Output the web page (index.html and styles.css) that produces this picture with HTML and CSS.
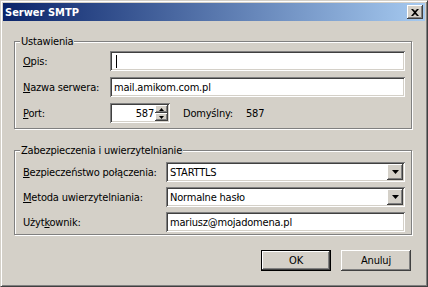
FILE: index.html
```html
<!DOCTYPE html>
<html lang="pl">
<head>
    <meta charset="UTF-8">
    <meta name="viewport" content="width=device-width, initial-scale=1.0">
    <title>Serwer SMTP</title>

    <link rel="stylesheet" href="styles.css">
</head>
<body>
  <div class="window">
    <div class="titlebar">
      <span class="title">Serwer SMTP</span>
      <span class="close">
        <svg width="8" height="7" viewBox="0 0 8 7"><path d="M0 0h2l2 2 2-2h2L5 3.5 8 7H6L4 5 2 7H0l3-3.5z" fill="#000"/></svg>
      </span>
    </div>

    <div class="content">
      <div class="group settings">
        <span class="legend">Ustawienia</span>

        <div class="row">
          <span class="label"><u>O</u>pis:</span>
          <div class="edit"><span class="caret"></span></div>
        </div>
        <div class="row">
          <span class="label"><u>N</u>azwa serwera:</span>
          <div class="edit">mail.amikom.com.pl</div>
        </div>
        <div class="row">
          <span class="label"><u>P</u>ort:</span>
          <div class="edit spin">
            <span class="spin-value">587</span>
            <span class="spin-btns">
              <span class="bevel"><svg width="5" height="3" viewBox="0 0 5 3"><path d="M2.5 0L5 3H0z" fill="#000"/></svg></span>
              <span class="bevel"><svg width="5" height="3" viewBox="0 0 5 3"><path d="M0 0h5L2.5 3z" fill="#000"/></svg></span>
            </span>
          </div>
          <span class="default-label">Domyślny:</span>
          <span>587</span>
        </div>
      </div>

      <div class="group security">
        <span class="legend">Zabezpieczenia i uwierzytelnianie</span>

        <div class="row">
          <span class="label"><u>B</u>ezpieczeństwo połączenia:</span>
          <div class="edit combo">
            <span class="combo-text">STARTTLS</span>
            <span class="bevel drop"><svg width="7" height="4" viewBox="0 0 7 4"><path d="M0 0h7L3.5 4z" fill="#000"/></svg></span>
          </div>
        </div>
        <div class="row">
          <span class="label"><u>M</u>etoda uwierzytelniania:</span>
          <div class="edit combo">
            <span class="combo-text">Normalne hasło</span>
            <span class="bevel drop"><svg width="7" height="4" viewBox="0 0 7 4"><path d="M0 0h7L3.5 4z" fill="#000"/></svg></span>
          </div>
        </div>
        <div class="row">
          <span class="label">Użyt<u>k</u>ownik:</span>
          <div class="edit">mariusz@mojadomena.pl</div>
        </div>
      </div>

      <div class="buttons">
        <button class="btn default">OK</button>
        <button class="btn">Anuluj</button>
      </div>
    </div>
  </div>
</body>
</html>
```

FILE: styles.css
```css
*{
  margin: 0;
  padding: 0;
  box-sizing: border-box;
}

body{
  background-color: #d4d0c8;
  font-family: "DejaVu Sans", "Liberation Sans", sans-serif;
  font-stretch: condensed;
  font-size: 11px;
  letter-spacing: -0.2px;
  color: #000;
}

.window{
  width: 428px;
  height: 287px;
  padding: 2px;
  display: flex;
  flex-direction: column;
  background-color: #d4d0c8;
  border: 1px solid;
  border-color: #d4d0c8 #404040 #404040 #d4d0c8;
  box-shadow: inset 1px 1px #fff, inset -1px -1px #808080;
}

.titlebar{
  height: 18px;
  display: flex;
  align-items: center;
  justify-content: space-between;
  padding-left: 2px;
  background: linear-gradient(to right, #0a246a, #a6caf0);
}

.title{
  color: #fff;
  font-weight: bold;
  letter-spacing: 0;
}

.close{
  width: 16px;
  height: 14px;
  margin-right: 2px;
  display: flex;
  align-items: center;
  justify-content: center;
  background-color: #d4d0c8;
  box-shadow: inset -1px -1px #404040, inset 1px 1px #fff, inset -2px -2px #808080;
}

.content{
  padding: 0 13px 0 11px;
}

.group{
  position: relative;
  border: 1px solid #808080;
  box-shadow: inset 1px 1px #fff, 1px 1px #fff;
  padding: 9px 6px 0 8px;
  display: flex;
  flex-direction: column;
  gap: 6px;
}

.legend{
  position: absolute;
  top: -7px;
  left: 5px;
  line-height: 13px;
  padding: 0 1px;
  background-color: #d4d0c8;
}

.settings{
  margin-top: 20px;
  height: 88px;
}

.security{
  margin-top: 21px;
  height: 85px;
  padding-top: 11px;
  gap: 5px;
}

.row{
  display: flex;
  align-items: center;
  height: 20px;
}

.label{
  width: 87px;
  flex-shrink: 0;
}

.security .label{
  width: 143px;
}

.edit{
  flex: 1;
  height: 20px;
  padding: 2px 2px 2px 4px;
  display: flex;
  align-items: center;
  background-color: #fff;
  box-shadow: inset 1px 1px #808080, inset -1px -1px #fff, inset 2px 2px #404040, inset -2px -2px #d4d0c8;
}

.caret{
  width: 1px;
  height: 13px;
  margin-left: 2px;
  background-color: #000;
}

.spin{
  flex: none;
  width: 60px;
  padding: 2px;
}

.spin-value{
  flex: 1;
  text-align: right;
  padding-right: 1px;
}

.spin-btns{
  width: 13px;
  height: 16px;
  display: flex;
  flex-direction: column;
}

.bevel{
  display: flex;
  align-items: center;
  justify-content: center;
  background-color: #d4d0c8;
  box-shadow: inset -1px -1px #404040, inset 1px 1px #fff, inset -2px -2px #808080;
}

.spin-btns .bevel{
  height: 8px;
}

.default-label{
  margin-left: 13px;
  width: 63px;
}

.combo{
  padding: 2px;
}

.combo-text{
  flex: 1;
  padding-left: 2px;
}

.drop{
  width: 16px;
  height: 16px;
}

.buttons{
  display: flex;
  justify-content: flex-end;
  gap: 10px;
  margin-top: 15px;
  margin-right: 1px;
}

.btn{
  width: 70px;
  height: 21px;
  font: inherit;
  letter-spacing: inherit;
  color: #000;
  border: none;
  background-color: #d4d0c8;
  box-shadow: inset -1px -1px #404040, inset 1px 1px #fff, inset -2px -2px #808080;
}

.btn.default{
  border: 1px solid #000;
}
```
